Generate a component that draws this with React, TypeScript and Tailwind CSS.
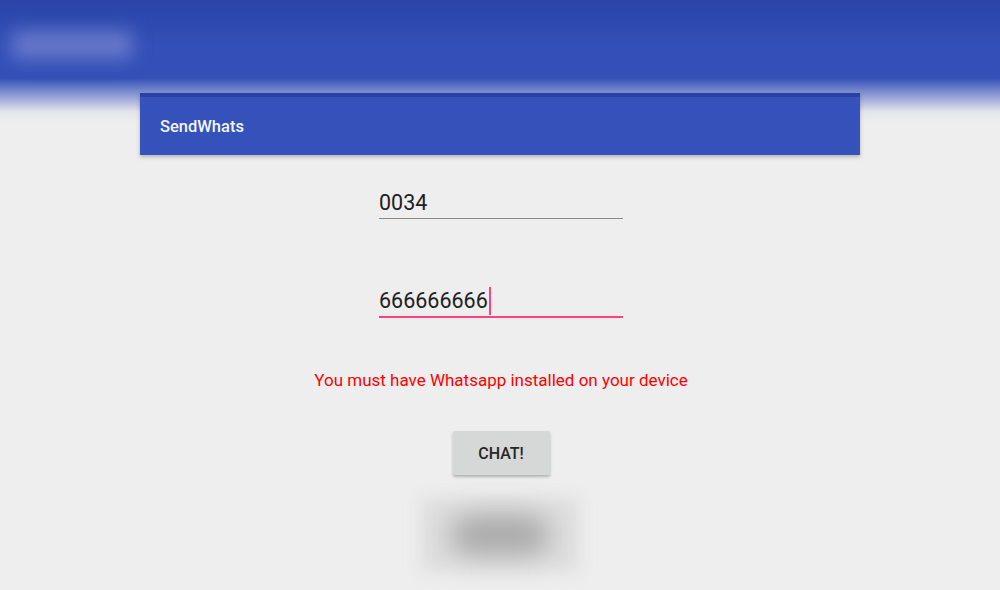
import React from "react";

export default function App() {
  return (
    <div
      className="w-[1000px] h-[590px] overflow-hidden flex flex-col items-center bg-[linear-gradient(to_bottom,#2a44a8_0px,#3350b8_45px,#3350b8_78px,#9ca7d8_98px,#e4e5ec_112px,#eeeeee_122px,#eeeeee_100%)]"
      style={{ fontFamily: "Roboto, 'Noto Sans', sans-serif" }}
    >
      <div className="w-full h-[93px] pt-[31px] pl-[12px]">
        <div className="w-[120px] h-[28px] bg-[#6678c9] blur-[9px]" />
      </div>
      <div className="w-[720px] h-[62px] bg-[#3452b9] border-t-[4px] border-[#2a41a3] shadow-[0_2px_4px_rgba(0,0,0,0.25)] flex items-center pl-5 pt-[2px]">
        <span className="text-[#f2f4fb] text-[16.5px] font-medium">SendWhats</span>
      </div>

      <div className="mt-[34px] ml-[2px] w-[244px] h-[28px] box-content pb-px border-b border-[#8a8a8a] text-[21.5px] leading-[28px] text-[#212121]">
        0034
      </div>

      <div className="mt-[68px] ml-[2px] w-[244px] h-[28px] box-content pb-px border-b-2 border-[#ff4081] text-[21.5px] leading-[28px] text-[#212121] flex items-center">
        <span>666666666</span>
        <span className="w-[2px] h-[28px] bg-[#ff4081] ml-px" />
      </div>

      <div className="mt-[50px] ml-[2px] text-[17px] leading-[24px] text-[#ff0000]">
        You must have Whatsapp installed on your device
      </div>

      <button className="mt-[39px] ml-[2px] w-[97px] h-[44px] rounded-[2px] bg-[#d6d7d7] shadow-[0_2px_3px_rgba(0,0,0,0.25)] text-[16px] font-medium text-[#262626] pt-px">
        CHAT!
      </button>

      <div className="mt-[22px] w-[160px] h-[76px] bg-[#dfdfdf] blur-[8px] flex items-center justify-center">
        <div className="w-[100px] h-[38px] rounded-full bg-[#a5a5a5] blur-[12px]" />
      </div>
    </div>
  );
}
